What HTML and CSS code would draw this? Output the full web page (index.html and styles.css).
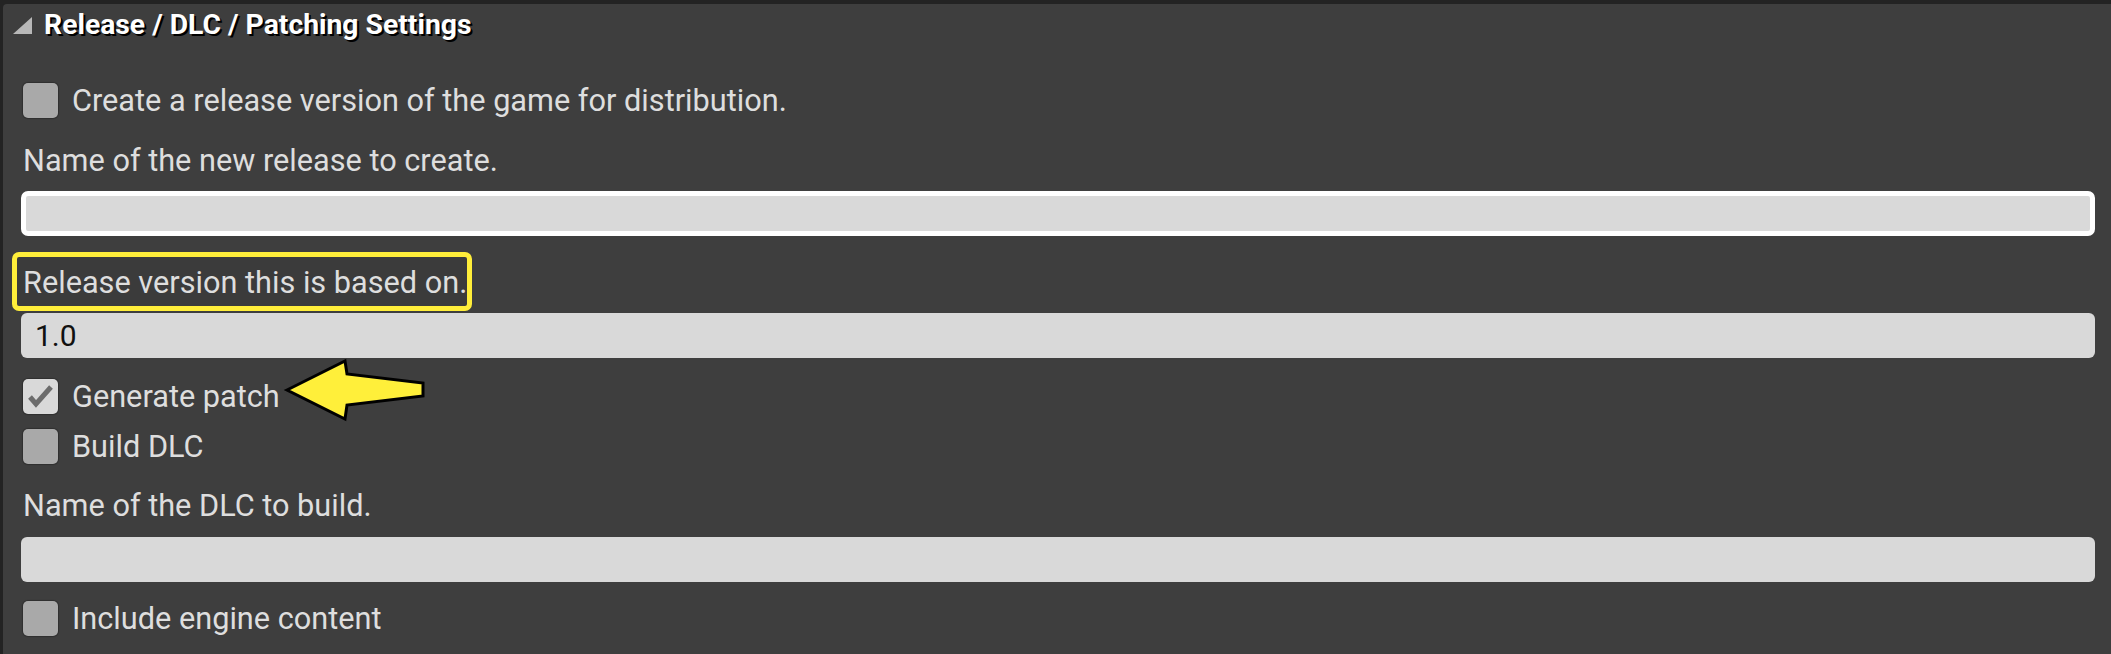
FILE: index.html
```html
<!DOCTYPE html>
<html lang="en">
<head>
<meta charset="utf-8">
<title>Release / DLC / Patching Settings</title>
<link rel="stylesheet" href="styles.css">
</head>
<body>
<div class="panel">
  <div class="header">
    <svg class="caret" width="19" height="17" viewBox="0 0 19 17"><polygon points="19,0 19,17 0,17" fill="#b8b8b8"/></svg>
    <span class="title">Release / DLC / Patching Settings</span>
  </div>
  <div class="fields">
    <div class="check-row m-43"><span class="box"></span><span class="text">Create a release version of the game for distribution.</span></div>
    <div class="label m-25">Name of the new release to create.</div>
    <div class="input focused m-13"></div>
    <div class="label highlight m-16">Release version this is based on.</div>
    <div class="input m-2">1.0</div>
    <div class="check-row m-21"><span class="box checked"><svg width="35" height="35" viewBox="0 0 35 35"><polyline points="7,18 13,25 28,8" fill="none" stroke="#6c6c6c" stroke-width="5" stroke-linejoin="miter"/></svg></span><span class="text">Generate patch</span></div>
    <div class="check-row m-15"><span class="box"></span><span class="text">Build DLC</span></div>
    <div class="label m-24">Name of the DLC to build.</div>
    <div class="input m-14"></div>
    <div class="check-row m-19"><span class="box"></span><span class="text">Include engine content</span></div>
  </div>
  <svg class="arrow" width="150" height="70" viewBox="0 0 150 70"><polygon points="7,35 65,6 67,19 143,28 143,41 67,50 65,64" fill="#ffef3a" stroke="#000" stroke-width="3" stroke-linejoin="miter"/></svg>
</div>
</body>
</html>
```
FILE: styles.css
```css
html, body {
  margin: 0;
  padding: 0;
  background: #232323;
  overflow: hidden;
}
body {
  font-family: Roboto, "Open Sans", sans-serif;
  color: #dedede;
}
.panel {
  position: relative;
  margin: 4px 0 0 3px;
  height: 650px;
  background: #3e3e3e;
  border-top-left-radius: 4px;
}
.header {
  display: flex;
  align-items: center;
  height: 30px;
  padding: 6px 0 0 10px;
}
.caret {
  display: block;
  margin-right: 12px;
}
.title {
  font-weight: 700;
  font-size: 28.3px;
  line-height: 30px;
  color: #ffffff;
  text-shadow: 2px 2px 0 #000;
}
.fields {
  display: flex;
  flex-direction: column;
  padding: 0 16px 0 18px;
  font-size: 30.7px;
}
.check-row {
  display: flex;
  align-items: center;
  height: 35px;
  margin-left: 2px;
}
.box {
  width: 35px;
  height: 35px;
  border-radius: 5px;
  background: #a9a9a9;
  box-shadow: 0 0 1px 1px rgba(0,0,0,0.25);
  margin-right: 14px;
  flex: none;
}
.box svg { display: block; }
.box.checked { background: #d9d9d9; }
.text, .label {
  line-height: 35px;
  white-space: nowrap;
}
.label {
  margin-left: 2px;
  height: 35px;
}
.input {
  box-sizing: border-box;
  height: 45px;
  background: #d9d9d9;
  border-radius: 6px;
  color: #111;
  font-size: 30px;
  line-height: 45px;
  padding-left: 14px;
}
.input.focused {
  border: 5px solid #ffffff;
  border-radius: 7px;
}
.label.highlight {
  align-self: flex-start;
  height: auto;
  margin-left: -9px;
  border: 5px solid #ffee3a;
  border-radius: 7px;
  padding: 8px 0 6px 6px;
  background: #3b3b3b;
}
.m-43 { margin-top: 43px; }
.m-25 { margin-top: 25px; }
.m-13 { margin-top: 13px; }
.m-16 { margin-top: 16px; }
.m-2 { margin-top: 2px; }
.m-21 { margin-top: 21px; }
.m-15 { margin-top: 15px; }
.m-24 { margin-top: 24px; }
.m-14 { margin-top: 14px; }
.m-19 { margin-top: 19px; }
.arrow {
  position: absolute;
  left: 277px;
  top: 351px;
}
```
